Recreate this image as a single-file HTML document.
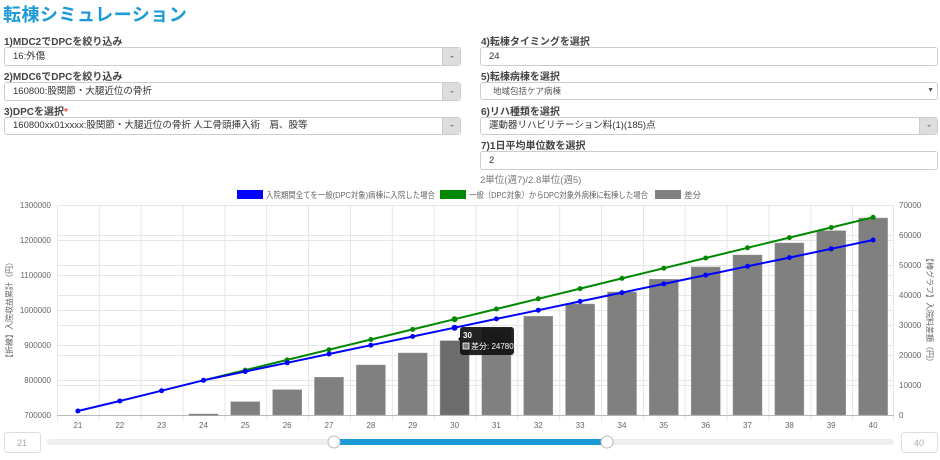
<!DOCTYPE html>
<html><head><meta charset="utf-8"><style>
*{box-sizing:border-box;margin:0;padding:0}
body{width:940px;height:460px;background:#fff;font-family:"Liberation Sans","Noto Sans CJK JP",sans-serif;color:#333;position:relative;overflow:hidden}
.a{position:absolute}
h1{position:absolute;left:3px;top:1px;font-size:18px;color:#1a9ad6;font-weight:bold;letter-spacing:0.5px}
.lb{position:absolute;font-size:10px;font-weight:bold;color:#444}
.sel{position:absolute;border:1px solid #ccc;border-radius:3px;background:#fff;font-size:9.5px;padding-left:8px;color:#333}
.arr{position:absolute;right:0;top:0;bottom:0;width:18px;background:#ddd;border-left:1px solid #ccc;border-radius:0 3px 3px 0}
.arr:after{content:"";position:absolute;left:7px;top:50%;margin-top:-1px;border-left:2px solid transparent;border-right:2px solid transparent;border-top:2px solid #888}
</style></head><body>
<h1>転棟シミュレーション</h1>
<div class="lb" style="left:4px;top:33px">1)MDC2でDPCを絞り込み</div>
<div class="sel" style="left:4px;top:47px;width:457px;height:19px;line-height:17px">16:外傷<div class="arr"></div></div>
<div class="lb" style="left:4px;top:68px">2)MDC6でDPCを絞り込み</div>
<div class="sel" style="left:4px;top:82px;width:457px;height:19px;line-height:17px">160800:股関節・大腿近位の骨折<div class="arr"></div></div>
<div class="lb" style="left:4px;top:103px">3)DPCを選択<span style="color:#e44">*</span></div>
<div class="sel" style="left:4px;top:117px;width:457px;height:18px;line-height:16px">160800xx01xxxx:股関節・大腿近位の骨折 人工骨頭挿入術　肩、股等<div class="arr"></div></div>

<div class="lb" style="left:481px;top:33px">4)転棟タイミングを選択</div>
<div class="sel" style="left:480px;top:47px;width:458px;height:19px;line-height:17px">24</div>
<div class="lb" style="left:481px;top:68px">5)転棟病棟を選択</div>
<div class="sel" style="left:480px;top:82px;width:458px;height:18px;line-height:16px;font-size:8.5px;color:#555;padding-left:12px">地域包括ケア病棟<span style="position:absolute;right:3px;top:0;font-size:7px">▼</span></div>
<div class="lb" style="left:481px;top:103px">6)リハ種類を選択</div>
<div class="sel" style="left:480px;top:117px;width:458px;height:18px;line-height:16px">運動器リハビリテーション料(1)(185)点<div class="arr"></div></div>
<div class="lb" style="left:481px;top:137px">7)1日平均単位数を選択</div>
<div class="sel" style="left:480px;top:151px;width:458px;height:19px;line-height:17px">2</div>
<div class="a" style="left:480px;top:172px;font-size:9.5px;color:#777">2単位(週7)/2.8単位(週5)</div>

<svg class="a" style="left:0;top:0" width="940" height="460" font-family="Liberation Sans, Noto Sans CJK JP, sans-serif">
<rect x="237" y="190" width="26" height="9" fill="#00f"/>
<text x="266" y="198" font-size="8.5" fill="#666" textLength="169" lengthAdjust="spacingAndGlyphs">入院期間全てを一般(DPC対象)病棟に入院した場合</text>
<rect x="440" y="190" width="26" height="9" fill="#080"/>
<text x="469" y="198" font-size="8.5" fill="#666" textLength="179" lengthAdjust="spacingAndGlyphs">一般（DPC対象）からDPC対象外病棟に転棟した場合</text>
<rect x="655" y="190" width="26" height="9" fill="#808080"/>
<text x="684" y="198" font-size="8.5" fill="#666">差分</text>
<g stroke="#e6e6e6" stroke-width="1">
<path d="M57 205.5H894M57 240.5H894M57 275.5H894M57 310.5H894M57 345.5H894M57 380.5H894M57 235.5H894M57 265.5H894M57 295.5H894M57 325.5H894M57 355.5H894M57 385.5H894"/>
<path d="M57.5 205V421M99.3 205V421M141.2 205V421M183 205V421M224.9 205V421M266.7 205V421M308.6 205V421M350.4 205V421M392.3 205V421M434.1 205V421M476 205V421M517.8 205V421M559.7 205V421M601.5 205V421M643.4 205V421M685.2 205V421M727.1 205V421M768.9 205V421M810.8 205V421M852.6 205V421M893.5 205V421"/>
</g>
<path d="M57 415.5H894" stroke="#bbb"/>
<g fill="#808080" stroke="#999" stroke-width="0.5">
<rect x="189" y="414" width="29" height="1.5"/>
<rect x="230.8" y="401.7" width="29" height="13.3"/>
<rect x="272.7" y="389.7" width="29" height="25.3"/>
<rect x="314.5" y="377.3" width="29" height="37.7"/>
<rect x="356.4" y="365" width="29" height="50"/>
<rect x="398.2" y="353" width="29" height="62"/>
<rect x="440.1" y="340.7" width="29" height="74.3" fill="#6c6c6c"/>
<rect x="481.9" y="328.5" width="29" height="86.5"/>
<rect x="523.8" y="316.3" width="29" height="98.7"/>
<rect x="565.6" y="304" width="29" height="111"/>
<rect x="607.5" y="292" width="29" height="123"/>
<rect x="649.3" y="279.3" width="29" height="135.7"/>
<rect x="691.2" y="267" width="29" height="148"/>
<rect x="733" y="255" width="29" height="160"/>
<rect x="774.9" y="243" width="29" height="172"/>
<rect x="816.7" y="230.7" width="29" height="184.3"/>
<rect x="858.6" y="218" width="29" height="197"/>
</g>
<polyline fill="none" stroke="#080" stroke-width="2" points="203.5,380.3 245.3,370.1 287.2,359.9 329,349.7 370.9,339.5 412.7,329.4 454.6,319.2 496.4,309 538.3,298.8 580.1,288.6 622,278.4 663.8,268.2 705.7,258 747.5,247.8 789.4,237.6 831.2,227.5 873.1,217.3"/>
<g fill="#080"><circle cx="245.3" cy="370.1" r="2.5"/><circle cx="287.2" cy="359.9" r="2.5"/><circle cx="329" cy="349.7" r="2.5"/><circle cx="370.9" cy="339.5" r="2.5"/><circle cx="412.7" cy="329.4" r="2.5"/><circle cx="454.6" cy="319.2" r="3"/><circle cx="496.4" cy="309" r="2.5"/><circle cx="538.3" cy="298.8" r="2.5"/><circle cx="580.1" cy="288.6" r="2.5"/><circle cx="622" cy="278.4" r="2.5"/><circle cx="663.8" cy="268.2" r="2.5"/><circle cx="705.7" cy="258" r="2.5"/><circle cx="747.5" cy="247.8" r="2.5"/><circle cx="789.4" cy="237.6" r="2.5"/><circle cx="831.2" cy="227.5" r="2.5"/><circle cx="873.1" cy="217.3" r="2.5"/></g>
<polyline fill="none" stroke="#00f" stroke-width="2" points="77.9,411 119.8,401 161.6,390.7 203.5,380.3 245.3,371.5 287.2,362.8 329,354 370.9,345.2 412.7,336.5 454.6,327.7 496.4,318.9 538.3,310.2 580.1,301.4 622,292.6 663.8,283.9 705.7,275.1 747.5,266.3 789.4,257.6 831.2,248.8 873.1,240"/>
<g fill="#00f"><circle cx="77.9" cy="411" r="2.5"/><circle cx="119.8" cy="401" r="2.5"/><circle cx="161.6" cy="390.7" r="2.5"/><circle cx="203.5" cy="380.3" r="2.5"/><circle cx="245.3" cy="371.5" r="2.5"/><circle cx="287.2" cy="362.8" r="2.5"/><circle cx="329" cy="354" r="2.5"/><circle cx="370.9" cy="345.2" r="2.5"/><circle cx="412.7" cy="336.5" r="2.5"/><circle cx="454.6" cy="327.7" r="3"/><circle cx="496.4" cy="318.9" r="2.5"/><circle cx="538.3" cy="310.2" r="2.5"/><circle cx="580.1" cy="301.4" r="2.5"/><circle cx="622" cy="292.6" r="2.5"/><circle cx="663.8" cy="283.9" r="2.5"/><circle cx="705.7" cy="275.1" r="2.5"/><circle cx="747.5" cy="266.3" r="2.5"/><circle cx="789.4" cy="257.6" r="2.5"/><circle cx="831.2" cy="248.8" r="2.5"/><circle cx="873.1" cy="240" r="2.5"/></g>
<g font-size="8" fill="#666" text-anchor="end">
<text x="51" y="208">1300000</text><text x="51" y="243">1200000</text><text x="51" y="278">1100000</text><text x="51" y="313">1000000</text><text x="51" y="348">900000</text><text x="51" y="383">800000</text><text x="51" y="418">700000</text>
</g>
<g font-size="8" fill="#666">
<text x="899" y="208">70000</text><text x="899" y="238">60000</text><text x="899" y="268">50000</text><text x="899" y="298">40000</text><text x="899" y="328">30000</text><text x="899" y="358">20000</text><text x="899" y="388">10000</text><text x="899" y="418">0</text>
</g>
<g font-size="8" fill="#666" text-anchor="middle">
<text x="77.9" y="428">21</text><text x="119.8" y="428">22</text><text x="161.6" y="428">23</text><text x="203.5" y="428">24</text><text x="245.3" y="428">25</text><text x="287.2" y="428">26</text><text x="329" y="428">27</text><text x="370.9" y="428">28</text><text x="412.7" y="428">29</text><text x="454.6" y="428">30</text><text x="496.4" y="428">31</text><text x="538.3" y="428">32</text><text x="580.1" y="428">33</text><text x="622" y="428">34</text><text x="663.8" y="428">35</text><text x="705.7" y="428">36</text><text x="747.5" y="428">37</text><text x="789.4" y="428">38</text><text x="831.2" y="428">39</text><text x="873.1" y="428">40</text>
</g>
<text transform="translate(12,310) rotate(-90)" font-size="8" fill="#666" text-anchor="middle">【折線】入院収益累計（円）</text>
<text transform="translate(927,310) rotate(90)" font-size="8" fill="#666" text-anchor="middle">【棒グラフ】入院料差額（円）</text>
<path d="M458 339l3-3v6z" fill="#111"/>
<rect x="460" y="327" width="54" height="28" rx="3" fill="#111" opacity="0.92"/>
<text x="463" y="338" font-size="8" font-weight="bold" fill="#fff">30</text>
<rect x="463" y="343" width="6" height="6" fill="#808080" stroke="#fff" stroke-width="0.8"/>
<text x="471" y="349" font-size="8" fill="#fff">差分: 24780</text>
<rect x="4.5" y="432.5" width="36" height="20" rx="3" fill="#fff" stroke="#ddd"/>
<text x="22" y="446" font-size="9" fill="#aaa" text-anchor="middle">21</text>
<rect x="901.5" y="432.5" width="36" height="20" rx="3" fill="#fff" stroke="#ddd"/>
<text x="919" y="446" font-size="9" fill="#aaa" text-anchor="middle">40</text>
<rect x="47" y="439" width="847" height="6" rx="3" fill="#eee"/>
<rect x="334" y="439" width="273" height="6" fill="#1a9ad6"/>
<circle cx="334" cy="442" r="6" fill="#fff" stroke="#bbb"/>
<circle cx="607" cy="442" r="6" fill="#fff" stroke="#bbb"/>
</svg>
</body></html>
